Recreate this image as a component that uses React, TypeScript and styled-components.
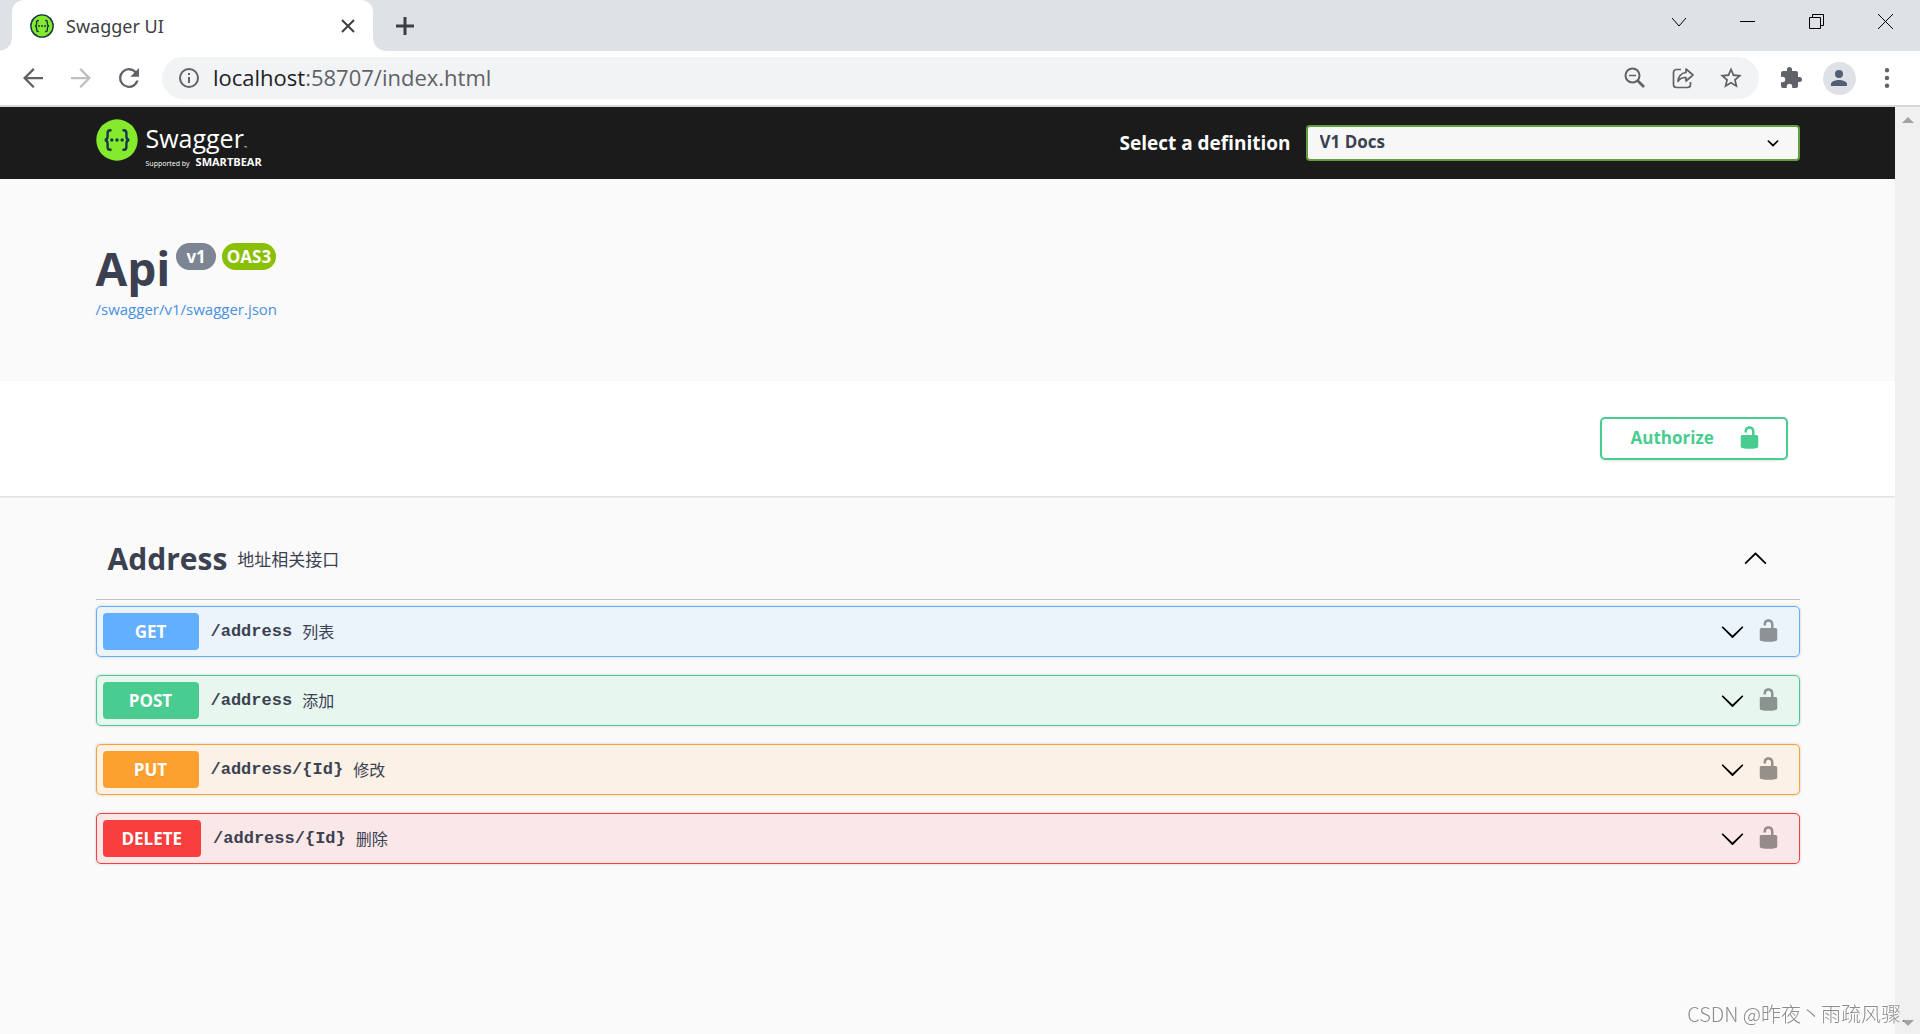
import React from "react";
import styled, { createGlobalStyle } from "styled-components";

const sans = `"Open Sans", "Noto Sans", "Noto Sans CJK SC", sans-serif`;
const mono = `"Liberation Mono", "Noto Sans CJK SC", monospace`;
const cjk = `"Noto Sans CJK SC", sans-serif`;
const ink = "#3b4151";

const GlobalStyle = createGlobalStyle`
  * { box-sizing: border-box; }
  body { margin: 0; background: #fafafa; color: ${ink}; font-family: ${sans}; }
  button { margin: 0; padding: 0; border: 0; background: none; font: inherit; color: inherit; cursor: pointer; }
  h1, h2, p { margin: 0; }
  svg { display: block; flex: none; }
`;

/* ---------- browser window ---------- */

const Window = styled.div`
  display: flex;
  flex-direction: column;
  min-height: 100vh;
`;

const TabStrip = styled.div`
  display: flex;
  height: 51px;
  padding-left: 12px;
  background: #dee1e6;
`;

const Tab = styled.div`
  position: relative;
  display: flex;
  align-items: center;
  width: 361px;
  padding: 0 18px;
  gap: 12px;
  border-radius: 12px 12px 0 0;
  background: #fff;
  color: #3c4043;
  font: 18px/24px "Noto Sans", sans-serif;

  &::before,
  &::after {
    content: "";
    position: absolute;
    bottom: 0;
    width: 12px;
    height: 12px;
  }
  &::before {
    right: 100%;
    background: radial-gradient(circle at 0 0, transparent 11px, #fff 12px);
  }
  &::after {
    left: 100%;
    background: radial-gradient(circle at 100% 0, transparent 11px, #fff 12px);
  }
`;

const TabTitle = styled.span`
  flex: 1;
`;

const IconButton = styled.button<{ $w?: number; $color?: string; $lift?: number }>`
  display: flex;
  align-items: center;
  justify-content: center;
  flex: none;
  width: ${(p) => p.$w ?? 48}px;
  padding-bottom: ${(p) => p.$lift ?? 0}px;
  color: ${(p) => p.$color ?? "#5f6368"};
`;

const WindowControls = styled.div`
  display: flex;
  height: 43px;
  margin-left: auto;
`;

const Toolbar = styled.div`
  display: flex;
  align-items: center;
  height: 56px;
  padding: 0 9px;
  border-bottom: 2px solid #d5d7da;
  background: #fff;
`;

const Omnibox = styled.div`
  display: flex;
  align-items: center;
  flex: 1;
  height: 42px;
  margin: 0 8px 0 9px;
  padding: 0 4px 0 15px;
  border-radius: 21px;
  background: #f1f3f4;
`;

const Url = styled.span`
  flex: 1;
  padding-bottom: 2px;
  margin-left: 12px;
  color: #5f6368;
  font: 22px/30px ${sans};

  b {
    color: #202124;
    font-weight: 400;
  }
`;

const Avatar = styled.span`
  display: flex;
  align-items: center;
  justify-content: center;
  width: 33px;
  height: 33px;
  border-radius: 50%;
  background: #dee1e6;
`;

const Viewport = styled.div`
  display: flex;
  flex: 1;
`;

const Page = styled.main`
  flex: 1;
  min-width: 0;
`;

const ScrollTrack = styled.div`
  display: flex;
  flex-direction: column;
  align-items: center;
  justify-content: space-between;
  width: 25px;
  padding: 10px 0 8px;
  background: #f0f0f0;
`;

/* ---------- swagger page ---------- */

const Wrapper = styled.div`
  max-width: 1744px;
  margin: 0 auto;
  padding: 0 20px;
`;

const TopBar = styled.header`
  background: #1b1b1b;
  color: #fff;
`;

const TopBarRow = styled(Wrapper)`
  display: flex;
  align-items: center;
  justify-content: space-between;
  height: 72px;
`;

const Logo = styled.a`
  display: flex;
  gap: 8px;
  height: 48px;
  color: #fff;
  text-decoration: none;
`;

const LogoText = styled.span`
  display: flex;
  flex-direction: column;
`;

const LogoName = styled.span`
  display: flex;
  align-items: flex-end;
  font-size: 25px;
  line-height: 38px;

  small {
    font-size: 4px;
    line-height: 18px;
  }
`;

const LogoTagline = styled.span`
  display: flex;
  align-items: baseline;
  gap: 6px;
  font-size: 7px;
  line-height: 10px;

  strong {
    font-size: 11px;
    font-weight: 700;
  }
`;

const Definition = styled.div`
  display: flex;
  align-items: center;
  gap: 15px;
  flex: 0 1 680px;
`;

const DefinitionLabel = styled.label`
  flex: none;
  font-size: 19px;
  font-weight: 700;
  line-height: 28px;
`;

const SelectBox = styled.div`
  position: relative;
  flex: 1;

  select {
    display: block;
    width: 100%;
    height: 36px;
    padding: 0 48px 2px 12px;
    border: 2px solid #62a03f;
    border-radius: 4px;
    appearance: none;
    background: #f7f7f7;
    color: ${ink};
    font: 700 17px/24px ${sans};
  }

  svg {
    position: absolute;
    top: 6px;
    right: 15px;
    color: #000;
    pointer-events: none;
  }
`;

const Info = styled.section`
  padding: 61px 0 59px;
`;

const TitleRow = styled.div`
  display: flex;
  align-items: flex-start;
  gap: 6px;
`;

const Title = styled.h1`
  font-size: 46px;
  font-weight: 700;
  line-height: 56px;
`;

const Version = styled.span<{ $bg: string; $pad: number }>`
  height: 27px;
  margin-top: 3px;
  padding: 0 ${(p) => p.$pad}px;
  border-radius: 14px;
  background: ${(p) => p.$bg};
  color: #fff;
  font-size: 17px;
  font-weight: 700;
  line-height: 28px;
`;

const SpecLink = styled.a`
  display: block;
  width: fit-content;
  color: #4990e2;
  font: 15px/26px ${sans};
  text-decoration: none;
`;

const Scheme = styled.section`
  padding: 36px 0;
  background: #fff;
  box-shadow: 0 1px 2px rgba(0, 0, 0, 0.15);
`;

const SchemeRow = styled(Wrapper)`
  display: flex;
  justify-content: flex-end;
`;

const Authorize = styled.button`
  display: flex;
  align-items: center;
  justify-content: space-between;
  width: 188px;
  height: 43px;
  margin-right: 12px;
  padding: 0 24px 2px 29px;
  border: 2px solid #49cc90;
  border-radius: 5px;
  box-shadow: 0 1px 2px rgba(0, 0, 0, 0.1);
  color: #49cc90;
  font-size: 17px;
  font-weight: 700;
`;

const TagHeader = styled.div`
  display: flex;
  align-items: center;
  height: 80px;
  margin-top: 24px;
  padding: 0 32px 2px 12px;
  border-bottom: 1px solid #bfc1c5;
`;

const TagTitle = styled.h2`
  font-size: 30px;
  font-weight: 700;
  line-height: 42px;
`;

const TagText = styled.p`
  flex: 1;
  padding-left: 10px;
  font: 400 17px/24px ${cjk};
`;

const Operations = styled.div`
  display: flex;
  flex-direction: column;
  gap: 18px;
  padding: 6px 0 40px;
`;

const Operation = styled.div<{ $line: string; $bg: string }>`
  display: flex;
  height: 51px;
  padding: 6px;
  border: 1px solid ${(p) => p.$line};
  border-radius: 5px;
  background: ${(p) => p.$bg};
  box-shadow: 0 0 3px rgba(0, 0, 0, 0.19);
`;

const Summary = styled.button`
  display: flex;
  align-items: center;
  flex: 1;
  text-align: left;

  svg {
    color: #000;
  }
`;

const Method = styled.span<{ $bg: string }>`
  min-width: 96px;
  padding: 0 19px;
  border-radius: 4px;
  background: ${(p) => p.$bg};
  color: #fff;
  font-size: 17px;
  font-weight: 700;
  line-height: 37px;
  text-align: center;
  text-shadow: 0 1px 0 rgba(0, 0, 0, 0.1);
`;

const Path = styled.span`
  padding: 0 10px 0 12px;
  font: 700 17px/24px ${mono};
`;

const Description = styled.span`
  flex: 1;
  padding-bottom: 1px;
  font: 400 16px/24px ${cjk};
`;

const Watermark = styled.div`
  position: fixed;
  right: 14px;
  bottom: 5px;
  color: #8c8c8c;
  font: 300 20px/30px ${cjk};
  text-shadow: -1px -1px 0 #fff;
  pointer-events: none;
`;

/* ---------- icons ---------- */

const Glyph = ({ d, size = 24, box = 24 }: { d: string; size?: number; box?: number }) => (
  <svg width={size} height={size} viewBox={`0 0 ${box} ${box}`} fill="currentColor" aria-hidden="true">
    <path d={d} />
  </svg>
);

const Stroke = ({ d, size, width = 1 }: { d: string; size: number; width?: number }) => (
  <svg width={size} height={size} viewBox={`0 0 ${size} ${size}`} fill="none" stroke="currentColor" strokeWidth={width} aria-hidden="true">
    <path d={d} />
  </svg>
);

const icons = {
  back: "M20 11.100H7.500l5.800-5.800L12 4l-8 8 8 8 1.300-1.300-5.800-5.800H20z",
  forward: "M12 4l-1.300 1.300 5.800 5.800H4v1.800h12.500l-5.800 5.800L12 20l8-8z",
  reload:
    "M17.650 6.350A7.960 7.960 0 0 0 12 4a8 8 0 1 0 7.730 10h-2A6.100 6.100 0 1 1 12 5.900c1.680 0 3.180.7 4.280 1.820L13 11h7V4z",
  info: "M11 7h2v2h-2zm0 4h2v6h-2zm1-9a10 10 0 1 0 0 20 10 10 0 0 0 0-20zm0 18a8 8 0 1 1 0-16 8 8 0 0 1 0 16z",
  star: "M22 9.240l-7.190-.62L12 2 9.190 8.630 2 9.240l5.460 4.730L5.820 21 12 17.270 18.180 21l-1.630-7.030zM12 15.400l-3.760 2.270 1-4.280-3.320-2.880 4.380-.38L12 6.100l1.710 4.040 4.380.38-3.320 2.880 1 4.280z",
  puzzle:
    "M20.500 11H19V7a2 2 0 0 0-2-2h-4V3.500a2.500 2.500 0 0 0-5 0V5H4a2 2 0 0 0-2 2v3.800h1.500a2.700 2.700 0 0 1 0 5.400H2V20c0 1.100.9 2 2 2h3.800v-1.500a2.700 2.700 0 0 1 5.400 0V22H17a2 2 0 0 0 2-2v-4h1.500a2.500 2.500 0 0 0 0-5z",
  person: "M12 12a4 4 0 1 0 0-8 4 4 0 0 0 0 8zm0 2c-2.670 0-8 1.340-8 4v2h16v-2c0-2.660-5.330-4-8-4z",
  dots: "M12 6.500a2.200 2.200 0 1 0 0-4.400 2.200 2.200 0 0 0 0 4.400zm0 7.700a2.200 2.200 0 1 0 0-4.400 2.200 2.200 0 0 0 0 4.400zm0 7.700a2.200 2.200 0 1 0 0-4.400 2.200 2.200 0 0 0 0 4.400z",
  lock: "M15.800 8H14V5.600C14 2.703 12.665 1 10 1 7.334 1 6 2.703 6 5.600V6h2v-.801C8 3.754 8.797 3 10 3c1.203 0 2 .754 2 2.199V8H4c-.553 0-1 .646-1 1.199V17c0 .549.428 1.139.951 1.307l1.197.387C5.672 18.861 6.550 19 7.100 19h5.800c.549 0 1.428-.139 1.951-.307l1.196-.387c.524-.167.953-.757.953-1.306V9.199C17 8.646 16.352 8 15.800 8z",
  down: "M17.418 6.109c.272-.268.709-.268.979 0s.271.701 0 .969l-7.908 7.830c-.27.268-.707.268-.979 0l-7.908-7.830c-.27-.268-.27-.701 0-.969.271-.268.709-.268.979 0L10 13.250l7.418-7.141z",
  up: "M17.418 14.908c.272.270.709.270.979 0s.271-.701 0-.969l-7.908-7.830c-.27-.268-.707-.268-.979 0l-7.908 7.830c-.27.268-.27.701 0 .969.271.268.709.268.979 0L10 7.767l7.418 7.141z",
  caret:
    "M13.418 7.859c.271-.268.709-.268.978 0 .27.268.272.701 0 .969l-3.908 3.830c-.27.268-.707.268-.979 0l-3.908-3.830c-.27-.267-.27-.701 0-.969.271-.268.709-.268.978 0L10 11l3.418-3.141z",
};

const SwaggerMark = ({ size, ring = false }: { size: number; ring?: boolean }) => (
  <svg width={size} height={size} viewBox="0 0 42 42" fill="none" aria-hidden="true">
    <circle cx="21" cy="21" r={ring ? 19.500 : 20.700} fill="#85ea2d" stroke={ring ? "#173647" : "none"} strokeWidth="2.500" />
    <path
      d="M15.500 11.300h-1.300c-2 0-2.600 1-2.600 2.700v3.600c0 1.900-.8 3.100-2.800 3.400 2 .3 2.800 1.500 2.800 3.400V28c0 1.700.6 2.700 2.600 2.700h1.300M26.500 11.300h1.300c2 0 2.600 1 2.600 2.700v3.600c0 1.900.8 3.100 2.800 3.400-2 .3-2.800 1.500-2.800 3.400V28c0 1.700-.6 2.700-2.600 2.700h-1.300"
      stroke="#173647"
      strokeWidth="2.400"
    />
    <g fill="#173647">
      <circle cx="15.800" cy="21" r="1.700" />
      <circle cx="21" cy="21" r="1.700" />
      <circle cx="26.200" cy="21" r="1.700" />
    </g>
  </svg>
);

const ShareIcon = () => (
  <svg width="24" height="24" viewBox="0 0 24 24" fill="none" stroke="currentColor" strokeWidth="1.700" strokeLinejoin="round" aria-hidden="true">
    <path d="M10 3.500H5.500A3 3 0 0 0 2.500 6.500v12a3 3 0 0 0 3 3h11a3 3 0 0 0 3-3V16" />
    <path d="M15 3l7 6-7 6v-3.500c-3.800-.2-6 .9-8 3.800.4-5.200 3-8.200 8-8.800z" />
  </svg>
);

const ZoomOutIcon = () => (
  <svg width="24" height="24" viewBox="0 0 24 24" fill="none" stroke="currentColor" strokeWidth="2" aria-hidden="true">
    <circle cx="9.500" cy="9.500" r="7" />
    <path d="M6 9.500h7" strokeWidth="1.500" />
    <path d="M14.500 14.500l6.500 6.500" strokeWidth="2.700" />
  </svg>
);

const TrackArrow = ({ d }: { d: string }) => (
  <svg width="12" height="6" viewBox="0 0 12 6" fill="#a3a3a3" aria-hidden="true">
    <path d={d} />
  </svg>
);

/* ---------- data ---------- */

const operations = [
  { method: "GET", path: "/address", text: "列表", color: "#61affe", bg: "#ebf3fb" },
  { method: "POST", path: "/address", text: "添加", color: "#49cc90", bg: "#e8f6f0" },
  { method: "PUT", path: "/address/{Id}", text: "修改", color: "#fca130", bg: "#fbf1e6" },
  { method: "DELETE", path: "/address/{Id}", text: "删除", color: "#f93e3e", bg: "#fae7e7" },
];

export default function App() {
  return (
    <Window>
      <GlobalStyle />
      <TabStrip>
        <Tab>
          <SwaggerMark size={24} ring />
          <TabTitle>Swagger UI</TabTitle>
          <IconButton $w={14} $color="#3c4043" aria-label="Close tab">
            <Stroke size={14} width={2} d="M1 1l12 12M13 1L1 13" />
          </IconButton>
        </Tab>
        <IconButton $w={64} $color="#3c4043" aria-label="New tab">
          <Stroke size={18} width={3} d="M9 0v18M0 9h18" />
        </IconButton>
        <WindowControls>
          <IconButton $w={69} $color="#000" aria-label="Search tabs">
            <Stroke size={16} d="M1 4l7 8 7-8" />
          </IconButton>
          <IconButton $w={69} $color="#000" aria-label="Minimize">
            <Stroke size={15} d="M0 7.500h15" />
          </IconButton>
          <IconButton $w={69} $color="#000" aria-label="Restore">
            <Stroke size={15} d="M.5 3.500h11v11H.5zM3.500 3.500v-3h11v11h-3" />
          </IconButton>
          <IconButton $w={69} $color="#000" aria-label="Close">
            <Stroke size={15} d="M0 0l15 15M15 0L0 15" />
          </IconButton>
        </WindowControls>
      </TabStrip>

      <Toolbar>
        <IconButton aria-label="Back">
          <Glyph d={icons.back} size={30} />
        </IconButton>
        <IconButton $color="#bcbec0" aria-label="Forward">
          <Glyph d={icons.forward} size={30} />
        </IconButton>
        <IconButton aria-label="Reload">
          <Glyph d={icons.reload} size={30} />
        </IconButton>
        <Omnibox>
          <IconButton $w={24} aria-label="Site information">
            <Glyph d={icons.info} />
          </IconButton>
          <Url>
            <b>localhost</b>:58707/index.html
          </Url>
          <IconButton aria-label="Zoom out">
            <ZoomOutIcon />
          </IconButton>
          <IconButton aria-label="Share">
            <ShareIcon />
          </IconButton>
          <IconButton aria-label="Bookmark">
            <Glyph d={icons.star} size={26} />
          </IconButton>
        </Omnibox>
        <IconButton aria-label="Extensions">
          <Glyph d={icons.puzzle} />
        </IconButton>
        <IconButton $color="#525e75" aria-label="Profile">
          <Avatar>
            <Glyph d={icons.person} />
          </Avatar>
        </IconButton>
        <IconButton aria-label="Menu">
          <Glyph d={icons.dots} />
        </IconButton>
      </Toolbar>

      <Viewport>
        <Page>
          <TopBar>
            <TopBarRow>
              <Logo href="#">
                <SwaggerMark size={42} />
                <LogoText>
                  <LogoName>
                    Swagger<small>™</small>
                  </LogoName>
                  <LogoTagline>
                    Supported by <strong>SMARTBEAR</strong>
                  </LogoTagline>
                </LogoText>
              </Logo>
              <Definition>
                <DefinitionLabel htmlFor="definition">Select a definition</DefinitionLabel>
                <SelectBox>
                  <select id="definition">
                    <option>V1 Docs</option>
                  </select>
                  <Glyph d={icons.caret} size={24} box={20} />
                </SelectBox>
              </Definition>
            </TopBarRow>
          </TopBar>

          <Wrapper>
            <Info>
              <TitleRow>
                <Title>Api</Title>
                <Version $bg="#7d8492" $pad={10}>v1</Version>
                <Version $bg="#89bf04" $pad={5}>OAS3</Version>
              </TitleRow>
              <SpecLink href="#">/swagger/v1/swagger.json</SpecLink>
            </Info>
          </Wrapper>

          <Scheme>
            <SchemeRow>
              <Authorize>
                Authorize
                <Glyph d={icons.lock} size={25} box={20} />
              </Authorize>
            </SchemeRow>
          </Scheme>

          <Wrapper>
            <TagHeader>
              <TagTitle>Address</TagTitle>
              <TagText>地址相关接口</TagText>
              <IconButton $w={25} $lift={3} $color="#000" aria-label="Collapse Address">
                <Glyph d={icons.up} size={25} box={20} />
              </IconButton>
            </TagHeader>
            <Operations>
              {operations.map((op) => (
                <Operation key={op.method} $line={op.color} $bg={op.bg}>
                  <Summary>
                    <Method $bg={op.color}>{op.method}</Method>
                    <Path>{op.path}</Path>
                    <Description>{op.text}</Description>
                    <Glyph d={icons.down} size={25} box={20} />
                  </Summary>
                  <IconButton $color="rgba(0, 0, 0, 0.4)" $w={48} $lift={3} aria-label={`Authorize ${op.method} ${op.path}`}>
                    <Glyph d={icons.lock} size={25} box={20} />
                  </IconButton>
                </Operation>
              ))}
            </Operations>
          </Wrapper>
        </Page>
        <ScrollTrack>
          <TrackArrow d="M6 0l6 6H0z" />
          <TrackArrow d="M0 0h12L6 6z" />
        </ScrollTrack>
      </Viewport>
      <Watermark>CSDN @昨夜丶雨疏风骤.</Watermark>
    </Window>
  );
}
